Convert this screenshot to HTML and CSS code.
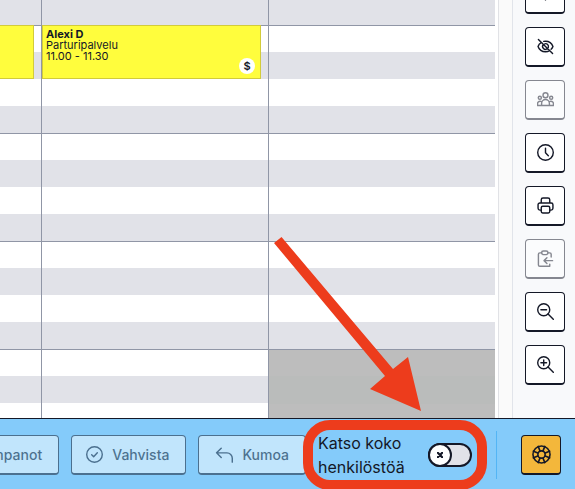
FILE: index.html
```html
<!DOCTYPE html>
<html lang="fi">
<head>
  <meta charset="UTF-8">
  <meta name="viewport" content="width=device-width, initial-scale=1.0">
  <title>Ajanvaraus</title>
  <link rel="stylesheet" href="styles.css">
</head>
<body>

<main class="workspace">
  <!-- Calendar -->
  <section class="calendar">
    <div class="column column-narrow">
      <div class="hour hour-partial"></div>
      <div class="hour"></div>
      <div class="hour"></div>
      <div class="hour"></div>
      <div class="hour"></div>
      <div class="event event-cut"></div>
    </div>
    <div class="column">
      <div class="hour hour-partial"></div>
      <div class="hour"></div>
      <div class="hour"></div>
      <div class="hour"></div>
      <div class="hour"></div>
      <div class="event">
        <strong>Alexi D</strong>
        <span>Parturipalvelu</span>
        <span>11.00 - 11.30</span>
        <span class="event-badge">$</span>
      </div>
    </div>
    <div class="column">
      <div class="hour hour-partial"></div>
      <div class="hour"></div>
      <div class="hour"></div>
      <div class="hour"></div>
      <div class="hour hour-closed"></div>
    </div>
  </section>

  <div class="gutter"></div>

  <!-- Side tools -->
  <aside class="tools">
    <button class="tool" type="button" aria-label="Lisää">
      <svg viewBox="0 0 24 24"><path d="M12 4v17M4 12h16"/></svg>
    </button>
    <button class="tool" type="button" aria-label="Piilota">
      <svg viewBox="0 0 24 24"><path d="M2 2l20 20M6.500 6.200C4 7.500 2 10 1.500 12c1.500 4.500 5.500 7.500 10.500 7.500 2.200 0 4.200-.6 5.800-1.600M9.500 4.800c.8-.2 1.600-.3 2.500-.3 5 0 9 3 10.500 7.500-.5 1.500-1.400 2.900-2.600 4M9 9.200a4 4 0 0 0 5.600 5.700M11 8.200a4 4 0 0 1 5 5"/></svg>
    </button>
    <button class="tool" type="button" aria-label="Henkilöstö" disabled>
      <svg viewBox="0 0 24 24"><circle cx="12" cy="6" r="3.500"/><circle cx="4" cy="9.500" r="2.200"/><circle cx="20" cy="9.500" r="2.200"/><path d="M6.500 20.500v-3a5.500 5.500 0 0 1 11 0v3zM6.500 20.500H.8V18c0-2.200 1.500-3.600 3.500-3.600 1 0 1.800.3 2.500.8M17.500 20.500h5.700V18c0-2.200-1.500-3.600-3.500-3.600-1 0-1.800.3-2.500.8"/></svg>
    </button>
    <button class="tool" type="button" aria-label="Kello">
      <svg viewBox="0 0 24 24"><circle cx="12" cy="12" r="11"/><path d="M12 6v6.500l4 4"/></svg>
    </button>
    <button class="tool" type="button" aria-label="Tulosta">
      <svg viewBox="0 0 24 24"><path d="M6 8.500V4a2.500 2.500 0 0 1 2.500-2.500h7A2.500 2.500 0 0 1 18 4v4.500M6 18.500H4A2.500 2.500 0 0 1 1.500 16v-5A2.500 2.500 0 0 1 4 8.500h16a2.500 2.500 0 0 1 2.500 2.500v5a2.500 2.500 0 0 1-2.500 2.500h-2"/><rect x="6" y="13" width="12" height="9.500" rx="2"/></svg>
    </button>
    <button class="tool" type="button" aria-label="Liitä" disabled>
      <svg viewBox="0 0 24 24"><rect x="6.500" y="1.500" width="9" height="5" rx="2.500"/><path d="M6.500 4H4a2 2 0 0 0-2 2v15a2 2 0 0 0 2 2h14v-3M15.500 4H18a2 2 0 0 1 2 2v4M22 15H10M14 11l-4 4 4 4"/></svg>
    </button>
    <button class="tool" type="button" aria-label="Loitonna">
      <svg viewBox="0 0 24 24"><circle cx="9.500" cy="9.500" r="8.500"/><path d="M15.600 15.600L23 23M5.500 9.500h8"/></svg>
    </button>
    <button class="tool" type="button" aria-label="Lähennä">
      <svg viewBox="0 0 24 24"><circle cx="9.500" cy="9.500" r="8.500"/><path d="M15.600 15.600L23 23M5.500 9.500h8M9.500 5.500v8"/></svg>
    </button>
  </aside>
</main>

<!-- Bottom bar -->
<footer class="bar">
  <div class="actions">
    <button class="action" type="button" disabled>Kampanot</button>
    <button class="action" type="button" disabled>
      <svg viewBox="0 0 24 24"><circle cx="12" cy="12" r="11"/><path d="M8 12.500l2.800 2.800L16 9.500"/></svg>
      Vahvista
    </button>
    <button class="action action-undo" type="button" disabled>
      <svg viewBox="-4 -2 28 28"><path d="M7.500 2.500L1 9l6.500 6.500M1 9h14.500a7.500 7.500 0 0 1 7.500 7.500V22"/></svg>
      Kumoa
    </button>
  </div>
  <div class="staff">
    <label for="all-staff">Katso koko henkilöstöä</label>
    <span class="switch">
      <input type="checkbox" id="all-staff">
      <svg class="switch-cross" viewBox="0 0 8 8"><path d="M1 1l6 6M7 1L1 7"/></svg>
    </span>
  </div>
  <button class="help" type="button" aria-label="Tuki">
    <svg viewBox="0 0 24 24"><circle cx="12" cy="12" r="10.800"/><circle cx="12" cy="12" r="4.600"/><path d="M16.600 13.900l5.600 2.300M13.900 16.600l2.300 5.600M10.100 16.600l-2.300 5.600M7.400 13.900l-5.600 2.300M7.400 10.100L1.800 7.800M10.100 7.400L7.800 1.800M13.900 7.400l2.300-5.600M16.600 10.100l5.600-2.300"/></svg>
  </button>
</footer>

<svg class="arrow" viewBox="0 0 147 174"><path d="M7.500 0L119 132l15-12 13 54-51-22 15-13L0 6z"/></svg>

</body>
</html>
```
FILE: styles.css
```css
* {
  box-sizing: border-box;
}

body {
  margin: 0;
  height: 100vh;
  display: flex;
  flex-direction: column;
  position: relative;
  overflow: hidden;
  font-family: Inter, "Liberation Sans", sans-serif;
  color: #141827;
  background-color: #fff;
}

svg {
  fill: none;
  stroke: currentColor;
  stroke-width: 2;
  stroke-linecap: round;
  stroke-linejoin: round;
}

.workspace {
  flex: 1;
  min-height: 0;
  display: flex;
  overflow: hidden;
}

/* Calendar */
.calendar {
  flex: 1;
  display: flex;
  padding-right: 3px;
}

.column {
  flex: 1;
  position: relative;
  border-right: 1px solid #9096a6;
}

.column:last-child {
  border-right: none;
}

.column-narrow {
  flex: 0 0 42px;
}

.hour {
  height: 108px;
  border-bottom: 1px solid #9096a6;
  background: repeating-linear-gradient(#fff 0 26px, #e1e2e8 26px 53px, #fff 53px 80px, #e1e2e8 80px 108px);
}

.hour-partial {
  height: 26px;
  background: #e1e2e8;
}

.hour-closed {
  background: repeating-linear-gradient(#bdbdbd 0 26px, #babcbb 26px 54px);
}

.event {
  position: absolute;
  top: 25px;
  left: 0;
  right: 7px;
  height: 54px;
  padding: 3px;
  display: flex;
  flex-direction: column;
  border: 1px solid #d2cb3a;
  background-color: #fffd3d;
  font-size: 11px;
  line-height: 11px;
}

.event-cut {
  border-left: none;
}

.event-badge {
  position: absolute;
  right: 5px;
  bottom: 4px;
  width: 16px;
  height: 16px;
  border-radius: 50%;
  background-color: #fff;
  font-weight: 600;
  line-height: 16px;
  text-align: center;
}

/* Side tools */
.gutter {
  width: 14px;
  border-left: 1px solid #e1e2e6;
  background-color: #fafafa;
}

.tools {
  display: flex;
  flex-direction: column;
  justify-content: flex-end;
  gap: 13px;
  padding: 0 10px 33px 12px;
  border-left: 1px solid #e1e4ea;
  background-color: #f8f9fb;
}

.tool,
.help {
  flex: none;
  width: 40px;
  height: 40px;
  padding: 0;
  display: flex;
  align-items: center;
  justify-content: center;
  border: 1px solid #141827;
  border-bottom-width: 2px;
  border-radius: 4px;
  background-color: #fff;
  color: #141827;
}

.tool svg {
  width: 17px;
  height: 17px;
}

.tool:disabled {
  opacity: 0.5;
}

/* Bottom bar */
.bar {
  display: flex;
  align-items: center;
  height: 71px;
  padding: 2px 14px 0 0;
  border-top: 1px solid #141827;
  background-color: #84cbfa;
}

.actions {
  flex: 1;
  min-width: 0;
  display: flex;
  justify-content: flex-end;
  gap: 12px;
}

.action {
  flex: none;
  height: 40px;
  padding: 0 16px 0 14px;
  display: flex;
  align-items: center;
  gap: 9px;
  border: 1px solid #141827;
  border-bottom-width: 2px;
  border-radius: 4px;
  background-color: #fff;
  color: #141827;
  font-family: inherit;
  font-size: 14px;
  font-weight: 500;
  opacity: 0.5;
}

.action svg {
  width: 17px;
  height: 17px;
}

.action-undo svg {
  width: 20px;
  height: 20px;
}

.staff {
  position: relative;
  display: flex;
  align-items: center;
  margin-left: 12px;
  padding-right: 24px;
  border-right: 1px solid #53b5f5;
  line-height: 24px;
}

.staff label {
  width: 110px;
}

/* Frame around the staff switch */
.staff::after {
  content: '';
  position: absolute;
  top: -11px;
  bottom: -11px;
  left: -15px;
  right: 9px;
  border: 10px solid #ed3c1c;
  border-radius: 27px;
  pointer-events: none;
}

.switch {
  position: relative;
  display: flex;
}

.switch input {
  appearance: none;
  width: 44px;
  height: 24px;
  margin: 0;
  border: 2px solid #141827;
  border-radius: 12px;
  background-color: #e1e2e8;
}

.switch input::before {
  content: '';
  display: block;
  width: 24px;
  height: 24px;
  margin: -2px;
  box-sizing: border-box;
  border: 2px solid #141827;
  border-radius: 50%;
  background-color: #fff;
}

.switch-cross {
  position: absolute;
  top: 9px;
  left: 9px;
  width: 6px;
  height: 6px;
  stroke-width: 3;
  pointer-events: none;
}

.help {
  margin-left: 24px;
  background-color: #f3b73b;
}

.help svg {
  width: 19px;
  height: 19px;
}

.arrow {
  position: absolute;
  right: 154px;
  bottom: 78px;
  width: 147px;
  height: 174px;
  fill: #ed3c1c;
  stroke: none;
  pointer-events: none;
}
```
